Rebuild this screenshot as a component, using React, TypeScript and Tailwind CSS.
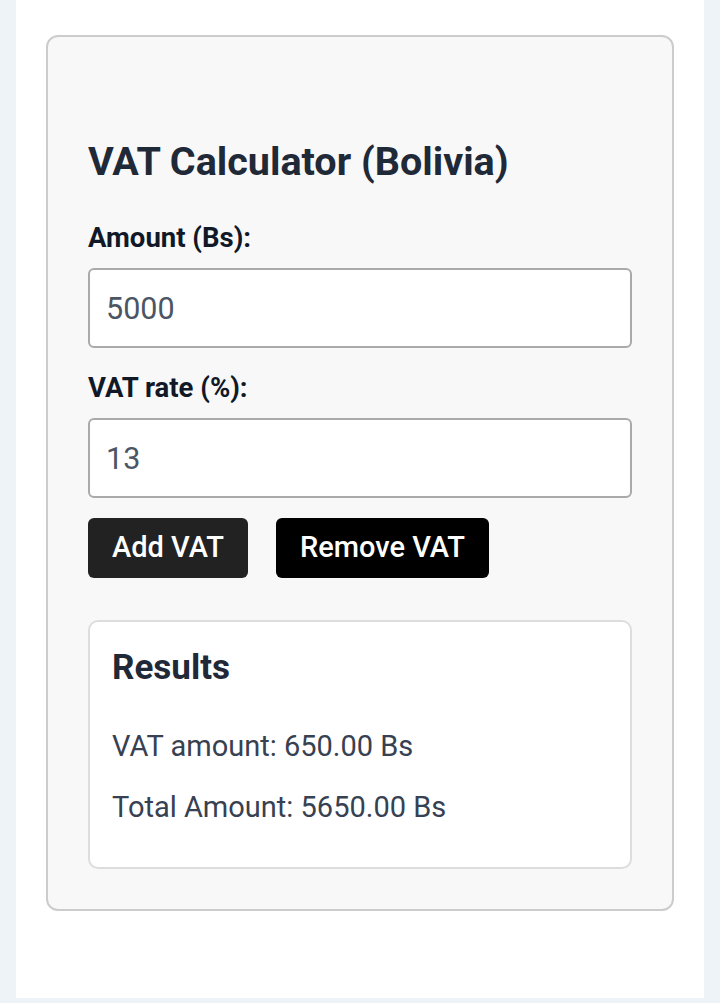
import { useState } from 'react';

export default function App() {
  const [amount, setAmount] = useState('5000');
  const [rate, setRate] = useState('13');

  return (
    <div className="min-h-screen bg-[#eef3f8] px-4 pb-[5px] font-['Roboto',sans-serif]">
      <div className="bg-white px-[30px] pt-[35px] pb-[87px]">
        <div className="rounded-[12px] border-2 border-[#cccccc] bg-[#f8f8f8] px-10 pt-[101px] pb-10">
          <h2 className="text-[39.5px] leading-[48px] font-bold text-[#1f2937]">VAT Calculator (Bolivia)</h2>

          {/* Amount */}
          <label className="mt-[35px] block text-[27.5px] leading-[34px] font-bold text-[#111827]">Amount (Bs):</label>
          <input
            value={amount}
            onChange={(e) => setAmount(e.target.value)}
            className="mt-[13px] block h-20 w-full rounded-[6px] border-2 border-[#aaaaaa] bg-white px-[16px] text-[30.5px] text-[#4b5563] outline-none"
          />

          {/* VAT rate */}
          <label className="mt-[23px] block text-[27.5px] leading-[34px] font-bold text-[#111827]">VAT rate (%):</label>
          <input
            value={rate}
            onChange={(e) => setRate(e.target.value)}
            className="mt-[13px] block h-20 w-full rounded-[6px] border-2 border-[#aaaaaa] bg-white px-[16px] text-[30.5px] text-[#4b5563] outline-none"
          />

          <div className="mt-5 flex gap-7">
            <button className="h-[60px] rounded-[6px] bg-[#222222] px-6 text-[29px] font-medium text-white">Add VAT</button>
            <button className="h-[60px] rounded-[6px] bg-black px-6 text-[29px] font-medium text-white">Remove VAT</button>
          </div>

          {/* Results */}
          <div className="mt-[42px] rounded-[10px] border-2 border-[#dddddd] bg-white px-[22px] pt-[26px] pb-[40px]">
            <h3 className="text-[35px] leading-[40px] font-bold text-[#1f2937]">Results</h3>
            <p className="mt-[38px] text-[29px] leading-[40px] text-[#374151]">VAT amount: 650.00 Bs</p>
            <p className="mt-[21px] text-[29px] leading-[40px] text-[#374151]">Total Amount: 5650.00 Bs</p>
          </div>
        </div>
      </div>
    </div>
  );
}
